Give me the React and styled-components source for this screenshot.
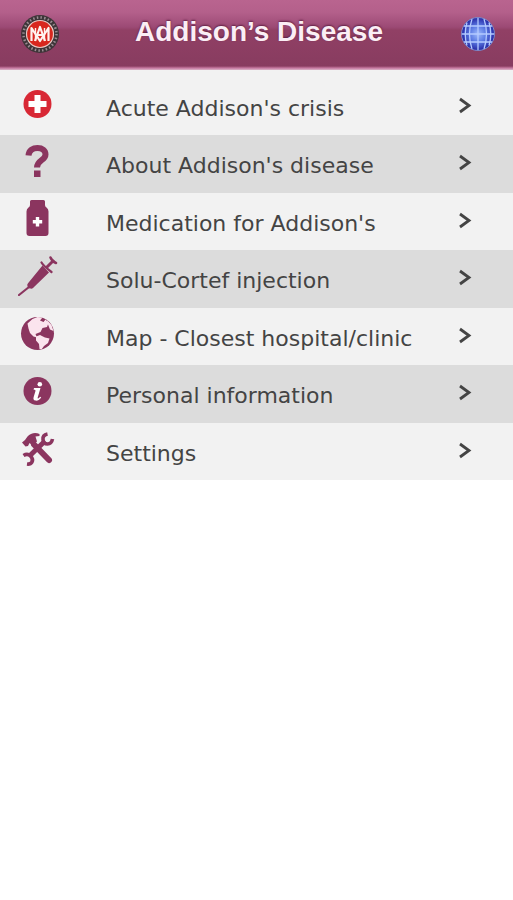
import React from 'react';
import styled, { createGlobalStyle } from 'styled-components';

const PLUM = '#8b355f';

const GlobalStyle = createGlobalStyle`
  * { box-sizing: border-box; }
  body { margin: 0; background: #ffffff; }
`;

const Page = styled.div`
  min-height: 100vh;
  font-family: "DejaVu Sans", Verdana, sans-serif;
  color: #444444;
`;

const Header = styled.header`
  display: grid;
  grid-template-columns: 40px 1fr 40px;
  align-items: center;
  height: 70px;
  padding: 0 15px 3px 20px;
  background: linear-gradient(#b9648f 0, #b4608b 12px, #9c4a75 27px, #914065 30px, #883c60 66px, #c5779f 68px, #dcb5c9 70px);
`;

const HeaderButton = styled.button`
  display: flex;
  justify-content: center;
  padding: 0;
  border: 0;
  background: none;
  cursor: pointer;
`;

const Title = styled.h1`
  margin: 0;
  padding-bottom: 4px;
  font: bold 28px/36px "Liberation Sans", Arial, sans-serif;
  color: #fbeef5;
  text-align: center;
  white-space: nowrap;
  text-shadow: 0 -1px 2px #602044;
`;

const Menu = styled.ul`
  margin: 0;
  padding: 8px 0 0;
  list-style: none;
  background: #f2f2f2;
`;

const MenuItem = styled.li`
  min-height: 57px;
  display: grid;
  &:nth-child(even) {
    min-height: 58px;
    background: #dcdcdc;
  }
`;

const MenuLink = styled.a`
  display: flex;
  align-items: center;
  padding: 0 40px 0 18px;
  color: inherit;
  text-decoration: none;
`;

const IconCell = styled.span`
  display: flex;
  flex: none;
  margin-right: 48px;
  padding-bottom: 6px;
`;

const Label = styled.span`
  flex: 1;
  padding-top: 4px;
  font-size: 22px;
  line-height: 28px;
`;

const ChevronCell = styled.span`
  display: flex;
  flex: none;
  padding-bottom: 2px;
`;

function Icon({ children }) {
  return (
    <svg width="40" height="40" viewBox="0 0 40 40" fill={PLUM} aria-hidden="true">
      {children}
    </svg>
  );
}

function Emblem() {
  return (
    <Icon>
      <circle cx="20" cy="20" r="19" fill="#3d3538" />
      <circle cx="20" cy="20" r="16.5" fill="none" stroke="#9c8c93" strokeWidth="2.5" strokeDasharray="1.5 2.2" />
      <circle cx="20" cy="20" r="13.5" fill="#d8271e" stroke="#e9c9c5" strokeWidth="1.2" />
      <g fill="none" stroke="#fff4ee" strokeWidth="2.2" strokeLinejoin="round">
        <path d="M11.500 27V14l8.500 13 8.500-13v13" />
        <path d="M15 27l5-14 5 14M16.500 21h7" />
        <path d="M15.500 14v13M24.500 14v13" strokeWidth="1.400" />
      </g>
    </Icon>
  );
}

function LanguageGlobe() {
  return (
    <Icon>
      <defs>
        <radialGradient id="globeFill">
          <stop offset="0" stopColor="#9db9fb" />
          <stop offset=".5" stopColor="#5b7ae3" />
          <stop offset="1" stopColor="#2427a4" />
        </radialGradient>
      </defs>
      <circle cx="20" cy="20" r="16.5" fill="url(#globeFill)" stroke="#8089c8" strokeWidth="1" />
      <g fill="none" stroke="#b4caff" strokeWidth="1.3">
        <path d="M20 4v32M4 20h32M6 12h28M6 28h28" />
        <path d="M14 5q-5 15 0 30M26 5q5 15 0 30M9 8.500q-3.500 11.500 0 23M31 8.500q3.500 11.500 0 23" />
      </g>
    </Icon>
  );
}

function CrossIcon() {
  return (
    <Icon>
      <circle cx="19.5" cy="20" r="14" fill="#d82835" />
      <path fill="#fff" d="M16.5 11h6v6h6v6h-6v6h-6v-6h-6v-6h6z" />
    </Icon>
  );
}

function QuestionIcon() {
  return (
    <Icon>
      <path
        fill="none"
        stroke={PLUM}
        strokeWidth="6"
        d="M10.500 14.500C11 9 15 7 19.500 7c5 0 8 2.500 8 6.500 0 6-8.500 5.500-8.500 13"
      />
      <path d="M16 29.500h6.500V36H16z" />
    </Icon>
  );
}

function BottleIcon() {
  return (
    <Icon>
      <path d="M13.500 1h12q1.500 0 1.500 1.500V6q0 1.500 1.500 2.500 2 1.500 2 4v21.500q0 3-3 3h-16q-3 0-3-3V12.500q0-2.500 2-4Q12 7.500 12 6V2.500Q12 1 13.500 1z" />
      <path fill="#fff" d="M17.800 18h3.400v3h3v3.400h-3v3h-3.400v-3h-3V21h3z" />
    </Icon>
  );
}

function SyringeIcon() {
  return (
    <Icon>
      <path d="M24.500 9.500l6.500 7-16 15.500q-1 1-2.500.5l-2-.2-1-2q-.8-1.500.5-3z" />
      <path
        fill="none"
        stroke={PLUM}
        strokeWidth="2.200"
        strokeLinecap="round"
        d="M11 31l-10 8M23.500 6.500c2 3.500 6 6.500 10 9.500"
      />
      <path fill="none" stroke={PLUM} strokeWidth="3" d="M28 12l8-8" />
      <path fill="none" stroke={PLUM} strokeWidth="2.500" strokeLinecap="round" d="M32.500 1.500c1 2.500 3 4.500 5.500 5.500" />
    </Icon>
  );
}

function EarthIcon() {
  return (
    <Icon>
      <circle cx="19.500" cy="19.500" r="16.500" />
      <g fill="#fbe4ee">
        <path d="M9.500 9.500l5-4.500 5-2 5 .5-2.500 3 3.500 1.500 2-2.500 3 3.500-1.500 4-4.500 1-2 4-5 2 1.500 3.500-3.500-1-3.500-3.500-1.500-4.500z" />
        <path d="M18 22.500l4-1.500 5 2.500 4.500 1-1.500 4.500-4 3-2.500 3.500-2-.5-.5-5-3-3.500zM28.500 5.500l5 5.500 2 6-3.500-1.500-2-5z" />
      </g>
    </Icon>
  );
}

function InfoIcon() {
  return (
    <Icon>
      <circle cx="19.500" cy="20" r="14" />
      <g fill="#fff">
        <circle cx="21.800" cy="13.300" r="2.300" />
        <path d="M16 17h6.500l-2.800 9.500c-.4 1.500.7 1.200 2.500-.8l1 .7c-2 2.800-4 3.600-5.800 3.200-1.800-.3-2.300-1.700-1.800-3.400l1.800-6c.3-1.200-.2-1.500-1.800-1.500z" />
      </g>
    </Icon>
  );
}

function ToolsIcon() {
  return (
    <Icon>
      <path fill="none" stroke={PLUM} strokeWidth="6" strokeLinecap="round" d="M16 15.500l15 15.500" />
      <path fill="none" stroke={PLUM} strokeWidth="5" d="M27 12L11.500 27" />
      <path d="M9.500 7.500c3-3.500 8-4.500 12-2.500v2l-4 .5 1.500 5-4.500 4-3-2.500-1.500 3-2.500.5-3.500-4 3-2.500z" />
      <path
        fill="none"
        stroke={PLUM}
        strokeWidth="3.600"
        d="M29.500 5q-5 1-4.500 5.500t4.500 4.500q4 0 5-5M5.500 26.500q4-2.500 7 .5t1.500 6q-1.500 2.500-5 2"
      />
    </Icon>
  );
}

function Chevron() {
  return (
    <svg width="16" height="18" viewBox="0 0 16 18" fill="none" stroke="#444444" strokeWidth="2.800" aria-hidden="true">
      <path d="M3 2L12 8.500 3 15" />
    </svg>
  );
}

const items = [
  { label: "Acute Addison's crisis", icon: CrossIcon },
  { label: "About Addison's disease", icon: QuestionIcon },
  { label: "Medication for Addison's", icon: BottleIcon },
  { label: 'Solu-Cortef injection', icon: SyringeIcon },
  { label: 'Map - Closest hospital/clinic', icon: EarthIcon },
  { label: 'Personal information', icon: InfoIcon },
  { label: 'Settings', icon: ToolsIcon },
];

export default function App() {
  return (
    <Page>
      <GlobalStyle />
      <Header>
        <HeaderButton type="button" aria-label="Home"><Emblem /></HeaderButton>
        <Title>Addison’s Disease</Title>
        <HeaderButton type="button" aria-label="Language"><LanguageGlobe /></HeaderButton>
      </Header>
      <nav aria-label="Main menu">
        <Menu>
          {items.map(({ label, icon: ItemIcon }) => (
            <MenuItem key={label}>
              <MenuLink href="#">
                <IconCell><ItemIcon /></IconCell>
                <Label>{label}</Label>
                <ChevronCell><Chevron /></ChevronCell>
              </MenuLink>
            </MenuItem>
          ))}
        </Menu>
      </nav>
    </Page>
  );
}
